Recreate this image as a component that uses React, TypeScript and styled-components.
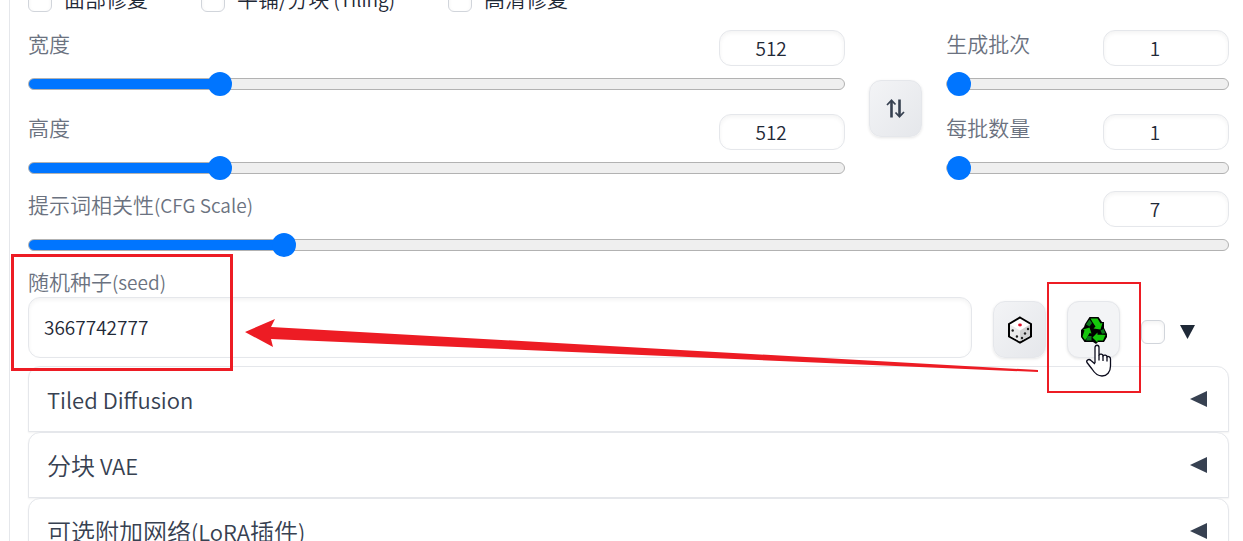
import React, { useId, useState } from 'react';
import styled, { createGlobalStyle } from 'styled-components';

const GlobalStyle = createGlobalStyle`
  *, *::before, *::after { box-sizing: border-box; }
  body {
    margin: 0;
    background: #ffffff;
    color: #1f2937;
    font-family: 'Noto Sans CJK SC', 'Noto Sans', sans-serif;
    font-size: 21px;
    font-weight: 350;
    line-height: 26px;
  }
`;

const Page = styled.main`
  height: 100vh;
  overflow: hidden;
  padding-left: 9px;
`;

const Panel = styled.div`
  min-height: 100%;
  border-left: 1px solid #e5e7eb;
  padding: 0 14px 0 18px;
`;

const Latin = styled.span<{ $size?: number }>`
  font-size: ${(p) => p.$size ?? 19}px;
  font-weight: 350;
`;

const OptionRow = styled.div`
  display: flex;
  gap: 53px;
  height: 24px;
  margin-top: -12px;
  margin-bottom: 18px;
`;

const Option = styled.label`
  display: flex;
  align-items: center;
  gap: 12px;
  height: 20px;
  white-space: nowrap;
`;

const Tick = styled.input`
  appearance: none;
  flex: none;
  align-self: flex-start;
  width: 24px;
  height: 24px;
  margin: 0;
  border: 1px solid #d1d5db;
  border-radius: 6px;
  background: #ffffff;
  box-shadow: inset 0 2px 4px rgba(0, 0, 0, 0.05);
`;

const SizeGrid = styled.div`
  display: grid;
  grid-template-columns: 26fr 53px 9fr;
  column-gap: 24px;
  align-items: start;
  margin-bottom: 11px;
`;

const SliderStack = styled.div`
  display: flex;
  flex-direction: column;
  gap: 18px;
`;

const SliderBlock = styled.div`
  display: flex;
  flex-direction: column;
  gap: 6px;
`;

const SliderHead = styled.div`
  display: flex;
  justify-content: space-between;
  align-items: flex-start;
`;

const FieldLabel = styled.label`
  color: #6b7280;
  white-space: nowrap;
`;

const NumberBox = styled.input`
  appearance: textfield;
  width: 126px;
  height: 36px;
  padding: 0 22px 2px 0;
  border: 1px solid #e5e7eb;
  border-radius: 12px;
  background: #ffffff;
  box-shadow: inset 0 2px 4px rgba(0, 0, 0, 0.05);
  color: #1f2937;
  font: inherit;
  font-size: 19px;
  text-align: center;
  &::-webkit-inner-spin-button { appearance: none; margin: 0; }
`;

const Range = styled.input`
  appearance: none;
  display: block;
  width: 100%;
  height: 24px;
  margin: 0;
  background: transparent;
  &::-webkit-slider-runnable-track {
    height: 12px;
    border: 1px solid #b2b2b2;
    border-radius: 6px;
    background: linear-gradient(#0075ff, #0075ff) border-box 0 0 / var(--fill) 100% no-repeat, #efefef;
  }
  &::-webkit-slider-thumb {
    appearance: none;
    width: 24px;
    height: 24px;
    margin-top: -7px;
    border-radius: 50%;
    background: #0075ff;
  }
`;

const ToolButton = styled.button<{ $flat?: boolean }>`
  display: flex;
  flex: none;
  align-items: center;
  justify-content: center;
  width: 53px;
  height: 57px;
  padding: 0;
  border: 1px solid #e5e7eb;
  border-radius: 12px;
  background: ${(p) => (p.$flat ? '#f3f4f6' : 'linear-gradient(to bottom right, #f3f4f6, #e5e7eb)')};
  box-shadow: 0 1px 3px rgba(0, 0, 0, 0.1);
  color: #374151;
`;

const SwapButton = styled(ToolButton)`
  margin-top: 50px;
`;

const SeedRow = styled.div`
  position: relative;
  display: flex;
  align-items: flex-end;
  margin: 9px 0 8px;
`;

const SeedField = styled.div`
  position: relative;
  display: flex;
  flex: 1;
  flex-direction: column;
  gap: 2px;
  margin-right: 21px;
  padding-top: 2px;
`;

const SeedInput = styled.input`
  width: 100%;
  height: 61px;
  padding: 0 15px 2px;
  border: 1px solid #e5e7eb;
  border-radius: 12px;
  background: #ffffff;
  box-shadow: inset 0 2px 4px rgba(0, 0, 0, 0.05);
  color: #1f2937;
  font: inherit;
  font-size: 19px;
`;

const ReuseSlot = styled.div`
  position: relative;
  margin: 0 21px;
`;

const ExtraToggle = styled.label`
  display: flex;
  align-items: center;
  gap: 15px;
  height: 24px;
  margin: 0 34px 14px 0;
`;

const SeedMark = styled.div`
  position: absolute;
  top: -12px;
  left: -17px;
  width: 222px;
  height: 117px;
  border: 3px solid #ed1c24;
  pointer-events: none;
`;

const ReuseMark = styled.div`
  position: absolute;
  inset: -19px -21px -35px -20px;
  border: 2px solid #ed1c24;
  pointer-events: none;
`;

const ArrowMark = styled.svg`
  position: absolute;
  top: 51px;
  left: 217px;
  width: calc(100% - 408px);
  height: 56px;
  pointer-events: none;
`;

const HandPointer = styled.svg`
  position: absolute;
  top: 43px;
  left: 18px;
  pointer-events: none;
`;

const Accordion = styled.button`
  display: flex;
  align-items: center;
  justify-content: space-between;
  width: 100%;
  height: 66px;
  padding: 0 21px 0 18px;
  border: 1px solid #e5e7eb;
  border-radius: 12px 12px 0 0;
  background: #ffffff;
  box-shadow: 0 1px 2px rgba(0, 0, 0, 0.05);
  color: #374151;
  font: inherit;
  font-size: 24px;
  text-align: left;
`;

type SliderProps = {
  label: React.ReactNode;
  min: number;
  max: number;
  initial: number;
};

function Slider({ label, min, max, initial }: SliderProps) {
  const id = useId();
  const [value, setValue] = useState(initial);
  const update = (e: React.ChangeEvent<HTMLInputElement>) => setValue(Number(e.target.value));
  const fill = `${((value - min) / (max - min)) * 100}%`;
  return (
    <SliderBlock>
      <SliderHead>
        <FieldLabel id={`${id}-label`} htmlFor={id}>{label}</FieldLabel>
        <NumberBox id={id} type="number" min={min} max={max} value={value} onChange={update} />
      </SliderHead>
      <Range
        type="range"
        aria-labelledby={`${id}-label`}
        min={min}
        max={max}
        value={value}
        onChange={update}
        style={{ '--fill': fill } as React.CSSProperties}
      />
    </SliderBlock>
  );
}

function SwapIcon() {
  return (
    <svg width="19" height="19" viewBox="0 0 19 19" fill="none" stroke="currentColor">
      <path d="M5.5 18.5V2M13.500 .5V17" strokeWidth="2.6" />
      <path d="M1 6L5.500 1.300L9.500 5.500M9.500 13.500L13.500 17.700L18 13" strokeWidth="1.7" />
    </svg>
  );
}

function DiceIcon() {
  return (
    <svg width="26" height="28" viewBox="0 0 26 28">
      <path d="M13 1.500L24 8V20.500L13 26.500L2 20.500V8Z" fill="#fff" stroke="#000" strokeWidth="2" />
      <path d="M3 8.600L13 14.500V25.400L3 20Z" fill="#ececec" />
      <path d="M13 14.500L23 8.600V20L13 25.400Z" fill="#d2d2d2" />
      <ellipse cx="13" cy="9" rx="1.900" ry="1.400" fill="#e0102a" />
      <g fill="#222">
        <circle cx="5.700" cy="14.500" r="1.200" />
        <circle cx="9.900" cy="20.500" r="1.200" />
        <circle cx="21" cy="13" r="1.200" />
        <circle cx="18" cy="17.500" r="1.200" />
        <circle cx="15" cy="22" r="1.200" />
      </g>
    </svg>
  );
}

function RecycleIcon() {
  return (
    <svg width="28" height="28" viewBox="0 0 28 28">
      <path
        d="M9.500 1H18.500L22 6H24V12L27 18V21L24 26H18L16 28L13 26H4.500L1 21V14L4 11L5 8Z"
        fill="#000"
      />
      <g fill="#16c60c">
        <path d="M10.500 2.500H17.500L20.500 7.500L22.500 7L20.500 13.500L13.500 12.500L15.500 10.500L12.500 6Z" />
        <path d="M25.500 19L23 24.500H17.500V26.500L12.500 21.500L17.500 16.500V18.800H22.500Z" />
        <path d="M2.500 20.500L4.500 14.500L3 13.500L9.500 11.500L11.500 17.500L9.500 17L6.500 22.500L5 24Z" />
      </g>
      <g fill="#0b7a1a">
        <path d="M9.500 3.500L12 7L9.500 10.500L6 8.500Z" />
        <path d="M20.500 14.500L23.500 13L25.300 17.300L22 17.700Z" />
        <path d="M7.500 20H11.500V24.500H6Z" />
      </g>
    </svg>
  );
}

function Hand() {
  return (
    <HandPointer width="28" height="34" viewBox="0 0 28 34">
      <path
        d="M10 19V3.500C10 .5 14 .5 14 3.500V11C15 9.500 18 10 18 12C19 10.500 22 11 22 13C22.500 12 25.500 12.500 25.500 15V22C25.500 28 22 32 17 32C12 32 9.500 29 7 25L2 18.500C.8 16 4 14.500 6 16.500L10 20"
        fill="#fff"
        stroke="#0b0b1c"
        strokeWidth="1.300"
        strokeLinejoin="round"
      />
      <path d="M14 11V16.500M18 12V17M22 13V17.500" stroke="#0b0b1c" strokeWidth="1.300" />
    </HandPointer>
  );
}

const sections = [
  { key: 'tiled', title: <Latin $size={22}>Tiled Diffusion</Latin> },
  { key: 'vae', title: <>分块<Latin $size={22}> VAE</Latin></> },
  { key: 'lora', title: <>可选附加网络<Latin $size={22}>(LoRA</Latin>插件<Latin $size={22}>)</Latin></> },
];

export default function App() {
  const [seed, setSeed] = useState('3667742777');
  return (
    <Page>
      <GlobalStyle />
      <Panel>
        <OptionRow>
          <Option><Tick type="checkbox" />面部修复</Option>
          <Option><Tick type="checkbox" /><span>平铺/分块<Latin> (Tiling)</Latin></span></Option>
          <Option><Tick type="checkbox" />高清修复</Option>
        </OptionRow>

        <SizeGrid>
          <SliderStack>
            <Slider label="宽度" min={64} max={2048} initial={512} />
            <Slider label="高度" min={64} max={2048} initial={512} />
          </SliderStack>
          <SwapButton type="button" aria-label="交换宽高"><SwapIcon /></SwapButton>
          <SliderStack>
            <Slider label="生成批次" min={1} max={100} initial={1} />
            <Slider label="每批数量" min={1} max={8} initial={1} />
          </SliderStack>
        </SizeGrid>

        <Slider label={<>提示词相关性<Latin>(CFG Scale)</Latin></>} min={1} max={30} initial={7} />

        <SeedRow>
          <SeedField>
            <FieldLabel htmlFor="seed">随机种子<Latin>(seed)</Latin></FieldLabel>
            <SeedInput id="seed" value={seed} onChange={(e) => setSeed(e.target.value)} />
            <SeedMark />
          </SeedField>
          <ToolButton type="button" aria-label="随机"><DiceIcon /></ToolButton>
          <ReuseSlot>
            <ToolButton type="button" $flat aria-label="重用种子"><RecycleIcon /></ToolButton>
            <ReuseMark />
            <Hand />
          </ReuseSlot>
          <ExtraToggle>
            <Tick type="checkbox" />
            <svg width="15" height="14" viewBox="0 0 15 14"><path d="M0 0H15L7.500 14Z" fill="#1f2937" /></svg>
          </ExtraToggle>
          <ArrowMark viewBox="0 0 793 56" preserveAspectRatio="none">
            <path d="M0 15L30 2L26 10L793 53V55L26 22L28 30Z" fill="#ed1c24" />
          </ArrowMark>
        </SeedRow>

        {sections.map((s) => (
          <Accordion key={s.key} type="button">
            <span>{s.title}</span>
            <svg width="17" height="16" viewBox="0 0 17 16"><path d="M17 0V16L0 8Z" fill="#374151" /></svg>
          </Accordion>
        ))}
      </Panel>
    </Page>
  );
}
